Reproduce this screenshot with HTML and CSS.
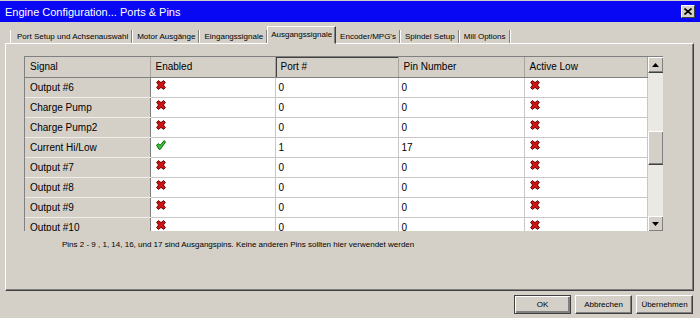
FILE: index.html
```html
<!DOCTYPE html>
<html>
<head>
<meta charset="utf-8">
<link rel="stylesheet" href="styles.css">
</head>
<body>
<svg width="0" height="0" class="defs">
  <defs>
    <symbol id="ix" viewBox="0 0 10 10">
      <polygon points="0.6,2.4 2.4,0.6 5,2.6 7.6,0.6 9.4,2.4 7.4,5 9.4,7.6 7.6,9.4 5,7.4 2.4,9.4 0.6,7.6 2.6,5" fill="#d01212" stroke="#5a0000" stroke-width="0.9" stroke-linejoin="round"/>
    </symbol>
    <symbol id="ick" viewBox="0 0 10 10">
      <polygon points="0.5,5.2 2.6,3.6 4,5.4 8.2,0.5 9.5,2 4.4,9.3 3,9.3" fill="#34c834" stroke="#0a560a" stroke-width="0.9" stroke-linejoin="round"/>
    </symbol>
  </defs>
</svg>
<div class="window">
  <div class="titlebar">
    <span class="title">Engine Configuration... Ports &amp; Pins</span>
    <span class="close">
      <svg width="8" height="7" viewBox="0 0 8 7"><path d="M0.5 0.5 L7.5 6.5 M7.5 0.5 L0.5 6.5" stroke="#000" stroke-width="1.6"/></svg>
    </span>
  </div>
  <div class="tabs">
    <span class="tab">Port Setup und Achsenauswahl</span>
    <span class="tab">Motor Ausgänge</span>
    <span class="tab">Eingangssignale</span>
    <span class="tab active">Ausgangssignale</span>
    <span class="tab">Encoder/MPG's</span>
    <span class="tab">Spindel Setup</span>
    <span class="tab">Mill Options</span>
  </div>
  <div class="panel">
    <div class="grid">
      <table class="table">
        <colgroup>
          <col class="c1"><col class="c2"><col class="c3"><col class="c4"><col class="c5">
        </colgroup>
        <thead>
          <tr>
            <th>Signal</th><th>Enabled</th><th class="pressed">Port #</th><th>Pin Number</th><th>Active Low</th>
          </tr>
        </thead>
        <tbody>
          <tr><td class="sig">Output #6</td><td class="ic"><svg class="ico"><use href="#ix"/></svg></td><td>0</td><td>0</td><td class="ic"><svg class="ico"><use href="#ix"/></svg></td></tr>
          <tr><td class="sig">Charge Pump</td><td class="ic"><svg class="ico"><use href="#ix"/></svg></td><td>0</td><td>0</td><td class="ic"><svg class="ico"><use href="#ix"/></svg></td></tr>
          <tr><td class="sig">Charge Pump2</td><td class="ic"><svg class="ico"><use href="#ix"/></svg></td><td>0</td><td>0</td><td class="ic"><svg class="ico"><use href="#ix"/></svg></td></tr>
          <tr><td class="sig">Current Hi/Low</td><td class="ic"><svg class="ico"><use href="#ick"/></svg></td><td>1</td><td>17</td><td class="ic"><svg class="ico"><use href="#ix"/></svg></td></tr>
          <tr><td class="sig">Output #7</td><td class="ic"><svg class="ico"><use href="#ix"/></svg></td><td>0</td><td>0</td><td class="ic"><svg class="ico"><use href="#ix"/></svg></td></tr>
          <tr><td class="sig">Output #8</td><td class="ic"><svg class="ico"><use href="#ix"/></svg></td><td>0</td><td>0</td><td class="ic"><svg class="ico"><use href="#ix"/></svg></td></tr>
          <tr><td class="sig">Output #9</td><td class="ic"><svg class="ico"><use href="#ix"/></svg></td><td>0</td><td>0</td><td class="ic"><svg class="ico"><use href="#ix"/></svg></td></tr>
          <tr><td class="sig">Output #10</td><td class="ic"><svg class="ico"><use href="#ix"/></svg></td><td>0</td><td>0</td><td class="ic"><svg class="ico"><use href="#ix"/></svg></td></tr>
        </tbody>
      </table>
      <div class="scrollbar">
        <div class="sbtn"><svg width="7" height="4" viewBox="0 0 7 4"><polygon points="3.5,0 7,4 0,4" fill="#000"/></svg></div>
        <div class="track">
          <div class="thumb"></div>
        </div>
        <div class="sbtn"><svg width="7" height="4" viewBox="0 0 7 4"><polygon points="0,0 7,0 3.5,4" fill="#000"/></svg></div>
      </div>
    </div>
    <div class="note">Pins 2 - 9 , 1, 14, 16, und 17 sind Ausgangspins. Keine anderen Pins sollten hier verwendet werden</div>
  </div>
  <div class="buttons">
    <span class="btn default">OK</span>
    <span class="btn">Abbrechen</span>
    <span class="btn">Übernehmen</span>
  </div>
</div>
</body>
</html>
```
FILE: styles.css
```css
html, body {
  margin: 0;
  padding: 0;
  background: #d4d0c8;
}
.defs {
  position: absolute;
  width: 0;
  height: 0;
}
.window {
  width: 700px;
  height: 318px;
  display: flex;
  flex-direction: column;
  font-family: "Liberation Sans", Arial, sans-serif;
  color: #000;
  overflow: hidden;
}
.titlebar {
  height: 21px;
  margin-top: 1px;
  background: #0808f4;
  display: flex;
  align-items: center;
  justify-content: space-between;
  padding: 0 5px 0 5px;
}
.title {
  color: #fff;
  font-size: 11px;
}
.close {
  width: 14px;
  height: 13px;
  background: #d4d0c8;
  border: 1px solid;
  border-color: #fff #404040 #404040 #fff;
  box-sizing: border-box;
  display: flex;
  align-items: center;
  justify-content: center;
}
.tabs {
  display: flex;
  align-items: flex-end;
  height: 16px;
  margin-top: 5px;
  padding-left: 10px;
}
.tab {
  font-size: 8px;
  padding: 0 3px 0 4px;
  height: 13px;
  line-height: 13px;
  border-right: 1px solid #808080;
  box-shadow: 1px 0 0 #fff;
  margin-right: 1px;
}
.tab:first-child {
  border-left: 1px solid #fff;
  padding-left: 6px;
}
.tab.active {
  height: 16px;
  line-height: 15px;
  border: 1px solid;
  border-color: #fff #404040 transparent #fff;
  box-shadow: inset -1px 0 0 #808080;
  margin: 0 0 0 -1px;
  padding: 0 3px;
  position: relative;
  top: 1px;
  background: #d4d0c8;
}
.panel {
  height: 248px;
  margin: 0 6px 0 5px;
  border: 1px solid;
  border-color: #fff #404040 #404040 #fff;
  box-shadow: inset -1px -1px 0 #808080;
  box-sizing: border-box;
  padding: 12px 0 0 18px;
}
.grid {
  display: flex;
  width: 639px;
  height: 175px;
  overflow: hidden;
  border-left: 1px solid #808080;
  border-top: 1px solid #808080;
  box-sizing: border-box;
}
.table {
  border-collapse: collapse;
  table-layout: fixed;
  width: 622px;
  font-size: 10px;
  align-self: flex-start;
}
.c1 { width: 125px; }
.c2 { width: 125px; }
.c3 { width: 123px; }
.c4 { width: 126px; }
.c5 { width: 123px; }
th {
  height: 20px;
  padding: 0 0 0 5px;
  line-height: 20px;
  text-align: left;
  font-weight: normal;
  background: #d4d0c8;
  border-right: 1px solid #a8a49c;
  border-bottom: 1px solid #808080;
  box-sizing: content-box;
}
th.pressed {
  box-shadow: inset 1px 1px 0 #404040;
}
td {
  height: 19px;
  padding: 0 0 0 3px;
  line-height: 19px;
  background: #fff;
  border-right: 1px solid #c8c8c8;
  border-bottom: 1px solid #c8c8c8;
  vertical-align: top;
  white-space: nowrap;
  box-sizing: content-box;
  overflow: hidden;
}
td.sig {
  background: #d4d0c8;
  padding-left: 5px;
  border-bottom-color: #f0eee8;
  border-right-color: #808080;
}
td.ic {
  padding-left: 5px;
  line-height: 0;
}
.ico {
  display: block;
  width: 10px;
  height: 10px;
  margin-top: 2px;
}
.scrollbar {
  width: 16px;
  height: 175px;
  display: flex;
  flex-direction: column;
  flex-shrink: 0;
}
.sbtn {
  height: 16px;
  background: #d4d0c8;
  border: 1px solid;
  border-color: #fff #404040 #404040 #fff;
  box-shadow: inset -1px -1px 0 #808080;
  box-sizing: border-box;
  display: flex;
  align-items: center;
  justify-content: center;
  flex-shrink: 0;
}
.track {
  flex: 1;
  background: #ebe9e4;
  padding-top: 58px;
}
.thumb {
  height: 34px;
  background: #d4d0c8;
  border: 1px solid;
  border-color: #fff #404040 #404040 #fff;
  box-shadow: inset -1px -1px 0 #808080;
  box-sizing: border-box;
}
.note {
  font-size: 8px;
  margin: 9px 0 0 38px;
}
.buttons {
  display: flex;
  justify-content: flex-end;
  gap: 4px;
  padding: 4px 7px 0 0;
}
.btn {
  width: 57px;
  height: 19px;
  box-sizing: border-box;
  font-size: 8px;
  display: flex;
  align-items: center;
  justify-content: center;
  border: 1px solid;
  border-color: #fff #404040 #404040 #fff;
  box-shadow: inset -1px -1px 0 #808080;
}
.btn.default {
  border-color: #404040;
  box-shadow: inset 1px 1px 0 #fff, inset -2px -2px 0 #808080;
}
```
